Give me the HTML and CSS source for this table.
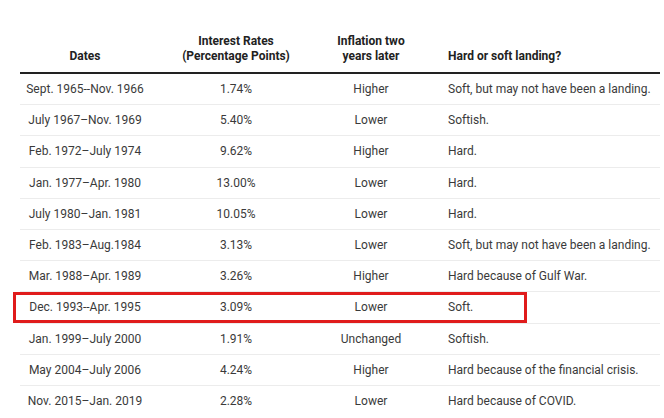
FILE: index.html
```html
<!DOCTYPE html>
<html>
<head>
<meta charset="utf-8">
<link rel="stylesheet" href="styles.css">
</head>
<body>
<div class="wrap">
  <table class="rates">
    <colgroup>
      <col class="c-date">
      <col class="c-rate">
      <col class="c-infl">
      <col class="c-land">
    </colgroup>
    <thead>
      <tr>
        <th class="ctr">Dates</th>
        <th class="ctr">Interest Rates<br>(Percentage Points)</th>
        <th class="ctr">Inflation two<br>years later</th>
        <th class="lft">Hard or soft landing?</th>
      </tr>
    </thead>
    <tbody>
      <tr><td class="ctr">Sept. 1965--Nov. 1966</td><td class="ctr">1.74%</td><td class="ctr">Higher</td><td class="lft">Soft, but may not have been a landing.</td></tr>
      <tr><td class="ctr">July 1967–Nov. 1969</td><td class="ctr">5.40%</td><td class="ctr">Lower</td><td class="lft">Softish.</td></tr>
      <tr><td class="ctr">Feb. 1972–July 1974</td><td class="ctr">9.62%</td><td class="ctr">Higher</td><td class="lft">Hard.</td></tr>
      <tr><td class="ctr">Jan. 1977–Apr. 1980</td><td class="ctr">13.00%</td><td class="ctr">Lower</td><td class="lft">Hard.</td></tr>
      <tr><td class="ctr">July 1980–Jan. 1981</td><td class="ctr">10.05%</td><td class="ctr">Lower</td><td class="lft">Hard.</td></tr>
      <tr><td class="ctr">Feb. 1983–Aug.1984</td><td class="ctr">3.13%</td><td class="ctr">Lower</td><td class="lft">Soft, but may not have been a landing.</td></tr>
      <tr><td class="ctr">Mar. 1988–Apr. 1989</td><td class="ctr">3.26%</td><td class="ctr">Higher</td><td class="lft">Hard because of Gulf War.</td></tr>
      <tr><td class="ctr">Dec. 1993--Apr. 1995</td><td class="ctr">3.09%</td><td class="ctr">Lower</td><td class="lft">Soft.</td></tr>
      <tr><td class="ctr">Jan. 1999–July 2000</td><td class="ctr">1.91%</td><td class="ctr">Unchanged</td><td class="lft">Softish.</td></tr>
      <tr><td class="ctr">May 2004–July 2006</td><td class="ctr">4.24%</td><td class="ctr">Higher</td><td class="lft">Hard because of the financial crisis.</td></tr>
      <tr><td class="ctr">Nov. 2015–Jan. 2019</td><td class="ctr">2.28%</td><td class="ctr">Lower</td><td class="lft">Hard because of COVID.</td></tr>
    </tbody>
  </table>
  <div class="highlight"></div>
</div>
</body>
</html>
```

FILE: styles.css
```css
html, body {
  margin: 0;
  padding: 0;
  background: #ffffff;
}

body {
  font-family: Roboto, "Liberation Sans", sans-serif;
  color: #3a3a3a;
}

.wrap {
  position: relative;
  width: 664px;
  height: 418px;
  overflow: hidden;
  padding-top: 34px;
  box-sizing: border-box;
}

.rates {
  margin-left: 20px;
  width: 640px;
  border-collapse: collapse;
  table-layout: fixed;
  font-size: 12px;
}

.c-date { width: 130px; }
.c-rate { width: 172px; }
.c-infl { width: 98px; }
.c-land { width: 240px; }

.rates th {
  font-weight: 700;
  color: #222222;
  line-height: 15px;
  vertical-align: bottom;
  padding: 0 0 8px 0;
  border-bottom: 2px solid #222222;
}

.rates td {
  line-height: 16.2px;
  padding: 7px 0;
  border-bottom: 1px solid #ececec;
  white-space: nowrap;
}

.rates tbody tr:last-child td {
  border-bottom: none;
}

.ctr { text-align: center; }
.lft { text-align: left; padding-left: 28px !important; }

.highlight {
  position: absolute;
  left: 13px;
  top: 292px;
  width: 514px;
  height: 31px;
  border: 3px solid #e01b1b;
  box-sizing: border-box;
}
```
